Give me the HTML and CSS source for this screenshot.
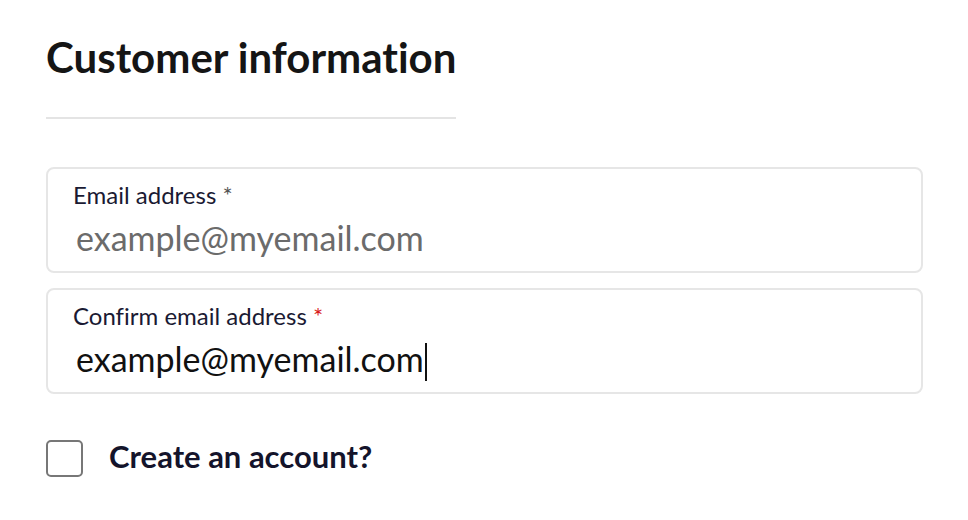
FILE: index.html
```html
<!DOCTYPE html>
<html lang="en">
<head>
    <meta charset="UTF-8">
    <title>Customer information</title>
    <link rel="stylesheet" href="styles.css">
</head>
<body>
<div class="container">
    <h2 class="section-title">Customer information</h2>

    <div class="field">
        <label for="email">Email address <span class="req">*</span></label>
        <input type="email" id="email" placeholder="example@myemail.com">
    </div>

    <div class="field">
        <label for="confirmEmail">Confirm email address <span class="req req-error">*</span></label>
        <div class="value">example@myemail.com<span class="caret"></span></div>
    </div>

    <label class="check">
        <span class="box"></span>
        <span class="check-text">Create an account?</span>
    </label>
</div>
</body>
</html>
```

FILE: styles.css
```css
body {
    margin: 0;
    font-family: Lato, "Open Sans", sans-serif;
    font-variant-ligatures: none;
    background-color: #fff;
    color: #14142b;
}
.container {
    padding: 31px 45px 0 46px;
}
.section-title {
    margin: 0;
    font-size: 42px;
    font-weight: 700;
    line-height: 52px;
    color: #151515;
    width: 410px;
    white-space: nowrap;
    padding-bottom: 34px;
    border-bottom: 2px solid #e4e4e4;
    margin-bottom: 48px;
}
.field {
    display: flex;
    flex-direction: column;
    height: 106px;
    box-sizing: border-box;
    border: 2px solid #e6e6e6;
    border-radius: 8px;
    padding: 12px 26px 0 25px;
    margin-bottom: 15px;
}
.field label {
    font-size: 24px;
    line-height: 28px;
    color: #1a1a33;
}
.req {
    color: #555;
}
.req-error {
    color: #d81b1b;
}
.field input,
.field .value {
    border: none;
    outline: none;
    padding: 0;
    margin: 9px 0 0 3px;
    font-family: inherit;
    font-variant-ligatures: none;
    font-size: 34px;
    line-height: 40px;
    height: 40px;
    color: #111;
    background: transparent;
}
.field input::placeholder {
    color: #6b6b6b;
}
.caret {
    display: inline-block;
    width: 2px;
    height: 38px;
    margin-left: 1px;
    background: #111;
    vertical-align: -9px;
}
.check {
    display: flex;
    align-items: center;
    gap: 26px;
    margin-top: 43px;
    font-size: 31px;
    font-weight: 700;
    color: #14142b;
}
.check-text {
    margin-bottom: 4px;
}
.box {
    width: 33px;
    height: 33px;
    border: 2px solid #777;
    border-radius: 5px;
}
```
